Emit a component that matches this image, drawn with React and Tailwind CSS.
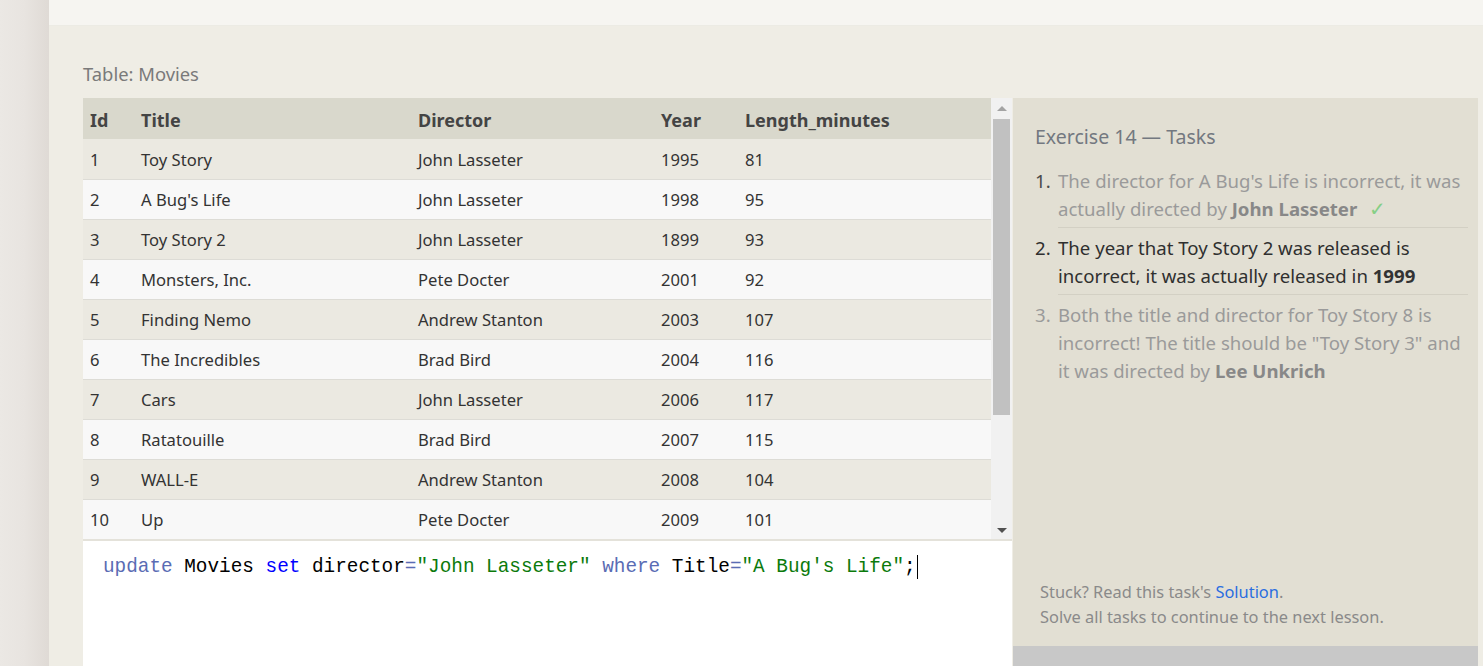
import React from 'react';

const movies = [
  [1, 'Toy Story', 'John Lasseter', 1995, 81],
  [2, "A Bug's Life", 'John Lasseter', 1998, 95],
  [3, 'Toy Story 2', 'John Lasseter', 1899, 93],
  [4, 'Monsters, Inc.', 'Pete Docter', 2001, 92],
  [5, 'Finding Nemo', 'Andrew Stanton', 2003, 107],
  [6, 'The Incredibles', 'Brad Bird', 2004, 116],
  [7, 'Cars', 'John Lasseter', 2006, 117],
  [8, 'Ratatouille', 'Brad Bird', 2007, 115],
  [9, 'WALL-E', 'Andrew Stanton', 2008, 104],
  [10, 'Up', 'Pete Docter', 2009, 101],
];

const cols = 'grid grid-cols-[51px_277px_243px_84px_1fr]';

function MoviesTable() {
  return (
    <div className="flex h-[443px] border-b-2 border-[#e4e2da]">
      <div className="w-[908px] overflow-hidden">
        <div className={`${cols} h-[41px] items-center bg-[#d9d8cc] pt-[3px] text-[18px] font-bold text-[#444]`}>
          {['Id', 'Title', 'Director', 'Year', 'Length_minutes'].map((h) => (
            <div key={h} className="px-[7px]">{h}</div>
          ))}
        </div>
        {movies.map((m, i) => (
          <div
            key={m[0]}
            className={`${cols} h-[40px] items-center text-[16.6px] text-[#333] ${
              i % 2 === 0 ? 'bg-[#ebe9e1]' : 'bg-[#f8f8f8]'
            } ${i === 0 ? 'pt-[3px]' : 'border-t border-[#dddcd6] pt-[1px]'}`}
          >
            {m.map((c, j) => (
              <div key={j} className="px-[7px]">{c}</div>
            ))}
          </div>
        ))}
      </div>
      {/* scrollbar */}
      <div className="relative w-[21px] bg-[#f1f1f1]">
        <div className="flex h-[21px] items-center justify-center">
          <div className="h-0 w-0 border-x-[5px] border-b-[5px] border-x-transparent border-b-[#a3a3a3]" />
        </div>
        <div className="mx-[2px] h-[296px] bg-[#c1c1c1]" />
        <div className="absolute bottom-[6px] left-0 flex w-full justify-center">
          <div className="h-0 w-0 border-x-[5px] border-t-[5px] border-x-transparent border-t-[#505050]" />
        </div>
      </div>
    </div>
  );
}

function Editor() {
  return (
    <div className="h-[125px] bg-white pl-[20px] pt-[12px]">
      <div className="flex items-center font-['Liberation_Mono',monospace] text-[19.35px] leading-[28px] text-black">
        <span className="text-[#5a6cb4]">update</span>
        <span>&nbsp;Movies&nbsp;</span>
        <span className="text-[#0000ff]">set</span>
        <span>&nbsp;director</span>
        <span className="text-[#5a6cb4]">=</span>
        <span className="text-[#0b7a0b]">"John Lasseter"</span>
        <span>&nbsp;</span>
        <span className="text-[#5a6cb4]">where</span>
        <span>&nbsp;Title</span>
        <span className="text-[#5a6cb4]">=</span>
        <span className="text-[#0b7a0b]">"A Bug's Life"</span>
        <span>;</span>
        <span className="ml-[1px] inline-block h-[24px] w-[1.5px] bg-black" />
      </div>
    </div>
  );
}

function TaskItem({ n, children, tone, last }) {
  const text = tone === 'active' ? 'text-[#2f2f2f]' : 'text-[#9a9a9a]';
  const num = tone === 'done' ? 'text-[#4a4a4a]' : tone === 'active' ? 'text-[#2f2f2f]' : 'text-[#9a9a9a]';
  return (
    <li className="flex">
      <div className={`w-[23px] shrink-0 pt-[6px] ${num}`}>{n}.</div>
      <div className={`flex-1 pt-[6px] pb-[4px] ${last ? '' : 'border-b border-[#d3d0c4]'} ${text}`}>
        {children}
      </div>
    </li>
  );
}

function TasksPanel() {
  return (
    <div className="flex w-[465px] flex-col">
      <div className="flex h-[548px] flex-col bg-[#e2dfd3] pl-[22px] pr-[10px] pt-[25px] pb-[17px]">
        <h2 className="text-[19.5px] leading-[28px] text-[#737880]">Exercise 14 — Tasks</h2>
        <ol className="mt-[10px] text-[18.6px] leading-[28px]">
          <TaskItem n={1} tone="done">
            The director for A Bug's Life is incorrect, it was actually directed by{' '}
            <b className="text-[#888]">John Lasseter</b>
            <span className="ml-[12px] text-[20px] leading-[20px] text-[#86cf86]">✓</span>
          </TaskItem>
          <TaskItem n={2} tone="active">
            The year that Toy Story 2 was released is incorrect, it was actually released in{' '}
            <b className="text-[#333]">1999</b>
          </TaskItem>
          <TaskItem n={3} tone="todo" last>
            Both the title and director for Toy Story 8 is incorrect! The title should be "Toy Story 3" and it was
            directed by <b className="text-[#888]">Lee Unkrich</b>
          </TaskItem>
        </ol>
        <div className="mt-auto pl-[5px] text-[16.4px] leading-[25px] text-[#8a8a8a]">
          <div>
            Stuck? Read this task's <span className="text-[#2a6ee0]">Solution</span>.
          </div>
          <div>Solve all tasks to continue to the next lesson.</div>
        </div>
      </div>
      <div className="h-[40px] bg-[#c8c8c8]" />
    </div>
  );
}

export default function App() {
  return (
    <div className="flex h-[666px] overflow-hidden font-['Noto_Sans',sans-serif]">
      <div className="w-[49px] shrink-0 bg-gradient-to-r from-[#ebe8e4] via-[#e8e4e0] to-[#dfdad5]" />
      <div className="flex flex-1 flex-col bg-[#f6f5f1]">
        <div className="h-[25px] shrink-0" />
        <div className="flex-1 border-t border-[#ecebe4] bg-[#efede5] pl-[34px] pt-[36px]">
          <div className="mb-[12px] text-[18.4px] leading-[24px] text-[#7a7a7a]">Table: Movies</div>
          <div className="flex">
            <div className="w-[929px] shrink-0">
              <MoviesTable />
              <Editor />
            </div>
            <div className="ml-[1px]">
              <TasksPanel />
            </div>
          </div>
        </div>
      </div>
    </div>
  );
}
